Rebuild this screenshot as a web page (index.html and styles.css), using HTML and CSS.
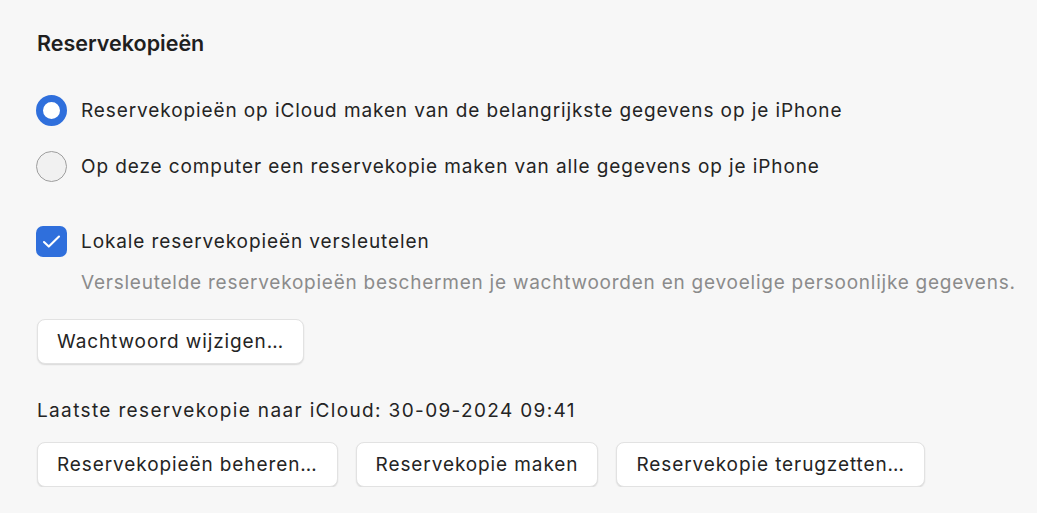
FILE: index.html
```html
<!DOCTYPE html>
<html lang="nl">
<head>
<meta charset="utf-8">
<link rel="stylesheet" href="styles.css">
</head>
<body>
<main class="panel">
  <h2 class="title">Reservekopieën</h2>
  <div class="radios">
    <label class="row"><span class="radio radio-on"></span><span class="label">Reservekopieën op iCloud maken van de belangrijkste gegevens op je iPhone</span></label>
    <label class="row"><span class="radio"></span><span class="label">Op deze computer een reservekopie maken van alle gegevens op je iPhone</span></label>
  </div>
  <label class="row check-row"><span class="check"><svg viewBox="0 0 31 31" width="31" height="31"><path d="M8 16 L12.8 20.6 L23 10.6" fill="none" stroke="#fff" stroke-width="2.1" stroke-linecap="round" stroke-linejoin="round"/></svg></span><span class="label">Lokale reservekopieën versleutelen</span></label>
  <p class="desc">Versleutelde reservekopieën beschermen je wachtwoorden en gevoelige persoonlijke gegevens.</p>
  <div class="btn-row first"><button class="btn">Wachtwoord wijzigen…</button></div>
  <p class="last">Laatste reservekopie naar iCloud: 30-09-2024 09:41</p>
  <div class="btn-row">
    <button class="btn">Reservekopieën beheren…</button>
    <button class="btn">Reservekopie maken</button>
    <button class="btn">Reservekopie terugzetten…</button>
  </div>
</main>
</body>
</html>
```

FILE: styles.css
```css
html, body {
  margin: 0;
  padding: 0;
  background: #f7f7f7;
}
body {
  font-family: Inter, "Liberation Sans", sans-serif;
  color: #242424;
  font-size: 19px;
  letter-spacing: 0.9px;
}
.panel {
  padding: 31px 0 0 37px;
  display: flex;
  flex-direction: column;
  align-items: flex-start;
}
.title {
  margin: 0;
  font-size: 21.5px;
  font-weight: 600;
  line-height: 24px;
  letter-spacing: 0;
  color: #1f1f1f;
}
.radios {
  margin-top: 40px;
  display: flex;
  flex-direction: column;
  gap: 25px;
}
.row {
  display: flex;
  align-items: center;
  gap: 14px;
  margin-left: -1px;
  height: 31px;
}
.label {
  line-height: 24px;
}
.radio {
  width: 31px;
  height: 31px;
  border-radius: 50%;
  box-sizing: border-box;
  border: 1.5px solid #9e9e9e;
  background: #f1f1f1;
  flex: none;
}
.radio-on {
  border: 7.5px solid #2f6fdc;
  background: #fff;
}
.check-row {
  margin-top: 44px;
}
.check {
  width: 31px;
  height: 31px;
  border-radius: 7px;
  background: #2f6fdc;
  flex: none;
  display: flex;
}
.desc {
  margin: 14px 0 0 44px;
  line-height: 24px;
  color: #8b8b8b;
  letter-spacing: 0.76px;
}
.btn-row {
  display: flex;
  gap: 18px;
  margin-top: 19px;
}
.btn-row.first {
  margin-top: 24px;
}
.btn {
  font: inherit;
  letter-spacing: inherit;
  color: #242424;
  height: 45px;
  padding: 0 19px;
  background: #fff;
  border: 1px solid #e2e2e2;
  border-radius: 8px;
  box-shadow: 0 1px 1.5px rgba(0,0,0,0.12);
}
.last {
  margin: 35px 0 0;
  line-height: 24px;
  letter-spacing: 1.35px;
}
```
